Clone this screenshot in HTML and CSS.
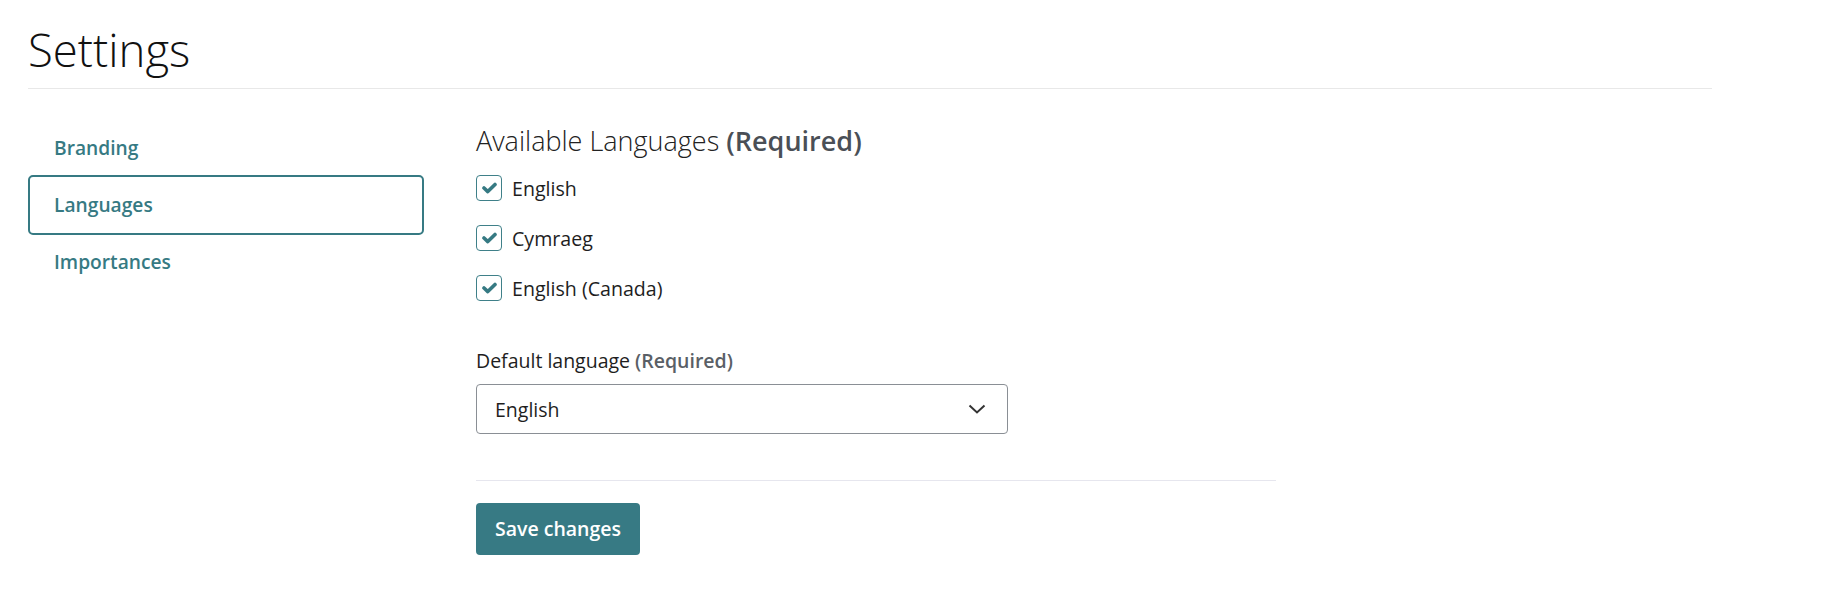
FILE: index.html
```html
<!DOCTYPE html>
<html>
<head>
    <meta charset="UTF-8">
    <title>Settings</title>
    <link rel="stylesheet" href="styles.css">
</head>
<body>

<div class="page">
    <h1 class="page-title">Settings</h1>

    <div class="layout">
        <div class="side-nav">
            <a class="nav-item">Branding</a>
            <a class="nav-item active">Languages</a>
            <a class="nav-item">Importances</a>
        </div>

        <div class="content">
            <h2 class="section-title">Available Languages <b>(Required)</b></h2>

            <div class="check-list">
                <label class="check-row">
                    <span class="check-box">
                        <svg width="15" height="12" viewBox="0 0 15 12"><path d="M2 6 L5.8 9.6 L13 2.4" fill="none" stroke="#367a83" stroke-width="3.6" stroke-linecap="round" stroke-linejoin="round"/></svg>
                    </span>
                    English
                </label>
                <label class="check-row">
                    <span class="check-box">
                        <svg width="15" height="12" viewBox="0 0 15 12"><path d="M2 6 L5.8 9.6 L13 2.4" fill="none" stroke="#367a83" stroke-width="3.6" stroke-linecap="round" stroke-linejoin="round"/></svg>
                    </span>
                    Cymraeg
                </label>
                <label class="check-row">
                    <span class="check-box">
                        <svg width="15" height="12" viewBox="0 0 15 12"><path d="M2 6 L5.8 9.6 L13 2.4" fill="none" stroke="#367a83" stroke-width="3.6" stroke-linecap="round" stroke-linejoin="round"/></svg>
                    </span>
                    English (Canada)
                </label>
            </div>

            <div class="field-label">Default language <b>(Required)</b></div>
            <div class="select">
                <span>English</span>
                <svg width="18" height="10" viewBox="0 0 18 10"><polyline points="1.5,1.5 9,8.5 16.5,1.5" fill="none" stroke="#333" stroke-width="2"/></svg>
            </div>

            <div class="divider"></div>

            <div class="btn">Save changes</div>
        </div>
    </div>
</div>

</body>
</html>
```

FILE: styles.css
```css
body {
    margin: 0;
    font-family: "Open Sans", "Noto Sans", sans-serif;
    color: #1e1e1e;
    background: #ffffff;
}

.page {
    width: 1684px;
    padding-left: 28px;
}

.page-title {
    margin: 0;
    padding: 18px 0 8px 0;
    font-size: 45.5px;
    font-weight: 300;
    line-height: 62px;
    color: #111;
    border-bottom: 1px solid #e8e8e8;
}

.layout {
    display: flex;
    gap: 52px;
}

.side-nav {
    width: 396px;
    margin-top: 30px;
}

.nav-item {
    display: block;
    height: 53px;
    padding: 3px 0 0 26px;
    line-height: 52px;
    font-size: 19.2px;
    font-weight: 600;
    color: #367a83;
    cursor: pointer;
}

.nav-item.active {
    height: 54px;
    padding: 2px 0 0 24px;
    border: 2px solid #367a83;
    border-radius: 5px;
    margin-bottom: -2px;
}

.content {
    margin-top: 34px;
    width: 800px;
}

.section-title {
    margin: 0;
    font-size: 27px;
    font-weight: 300;
    line-height: 36px;
    color: #222;
}

.section-title b {
    font-weight: 600;
    color: #4a4f56;
}

.check-list {
    margin-top: 4px;
}

.check-row {
    display: flex;
    align-items: center;
    gap: 10px;
    height: 50px;
    font-size: 19.6px;
    color: #1e1e1e;
}

.check-box {
    width: 24px;
    height: 24px;
    border: 1.5px solid #3f8089;
    border-radius: 4px;
    display: flex;
    align-items: center;
    justify-content: center;
}

.field-label {
    margin-top: 35px;
    font-size: 19.5px;
    line-height: 26px;
    color: #1e1e1e;
}

.field-label b {
    font-weight: 600;
    color: #5a5f66;
}

.select {
    margin-top: 10px;
    height: 48px;
    border: 1px solid #8a8f95;
    border-radius: 4px;
    display: flex;
    align-items: center;
    justify-content: space-between;
    padding: 0 21px 0 18px;
    width: 491px;
    font-size: 19.5px;
}

.divider {
    margin-top: 46px;
    height: 1px;
    background: #e6e6ee;
}

.btn {
    margin-top: 22px;
    width: 164px;
    height: 52px;
    line-height: 52px;
    text-align: center;
    background: #377a84;
    color: #fff;
    border-radius: 4px;
    font-size: 19.5px;
    font-weight: 600;
    cursor: pointer;
}
```
